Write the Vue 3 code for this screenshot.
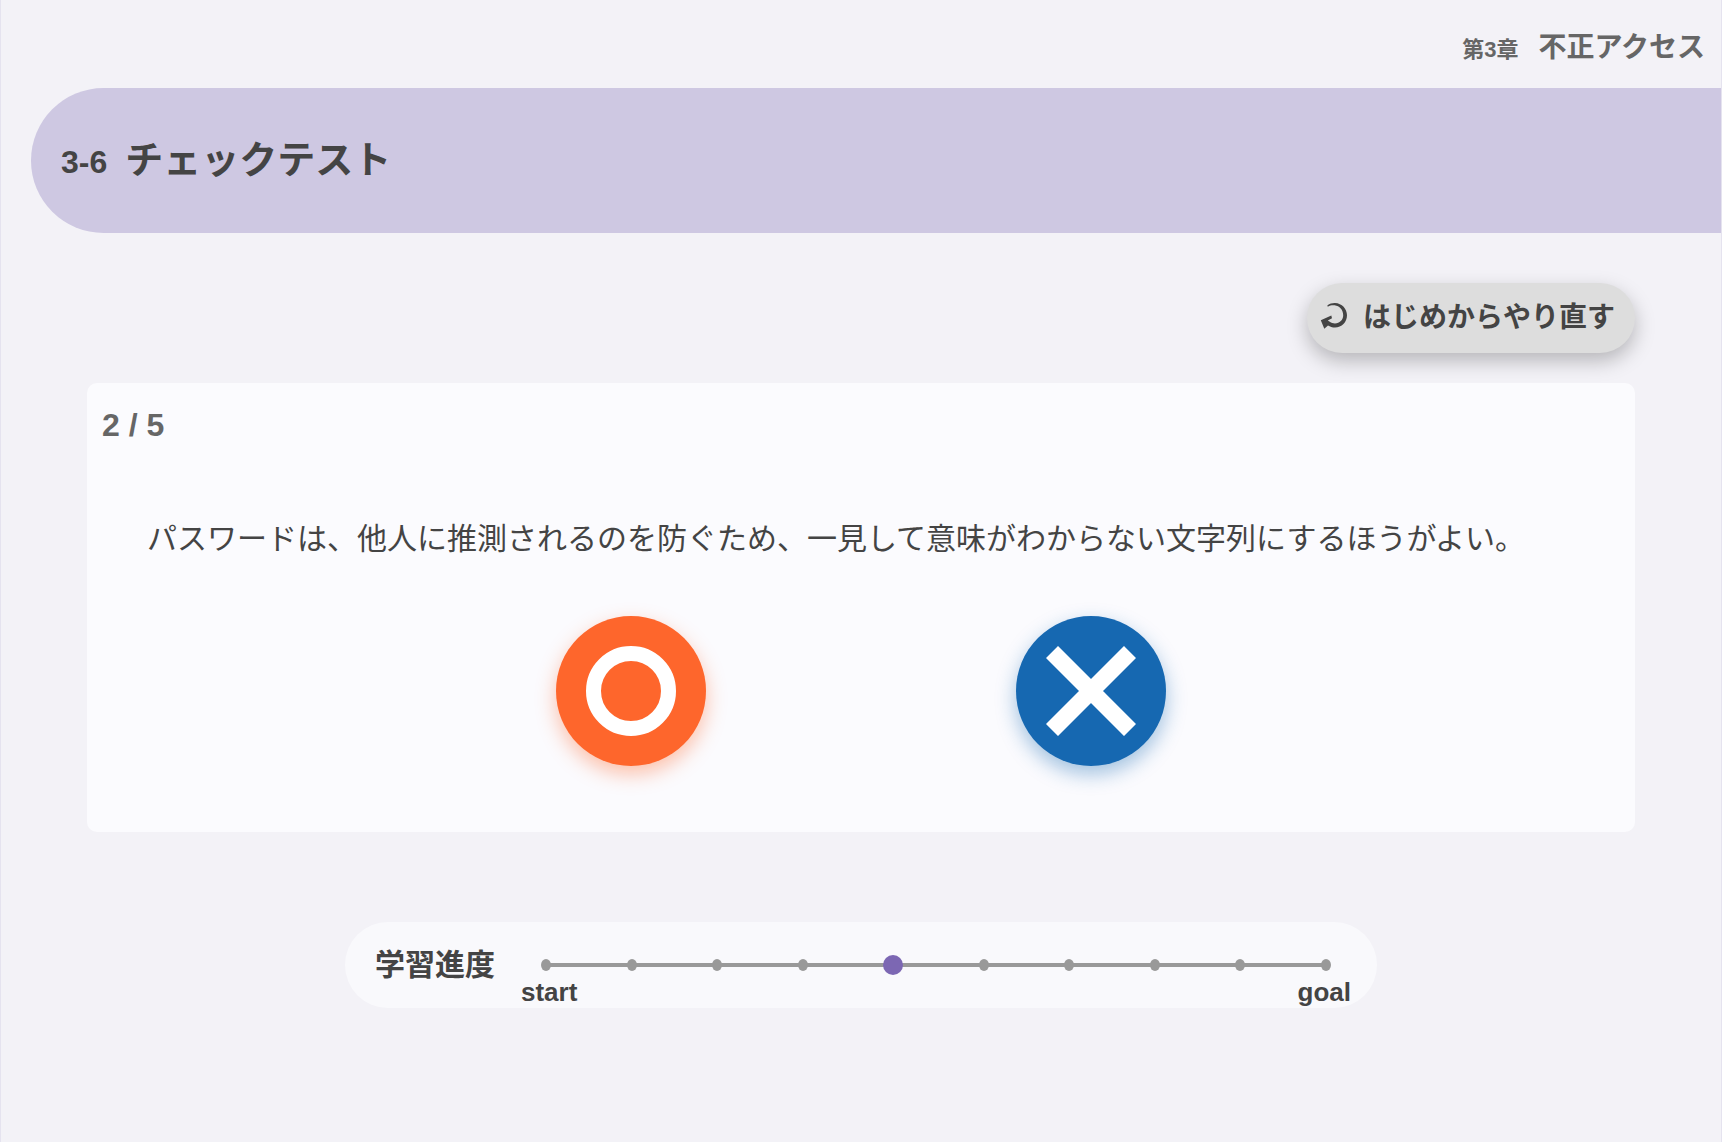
<template>
  <div class="page">
    <header class="chapter">
      <span class="chapter-no">第3章</span>
      <span class="chapter-name">不正アクセス</span>
    </header>

    <h1 class="title">
      <span class="title-no">3-6</span>
      <span>チェックテスト</span>
    </h1>

    <main class="content">
      <div class="toolbar">
        <button class="restart" type="button" @click="restart">
          <svg class="restart-icon" viewBox="0 0 26 30" aria-hidden="true">
            <path
              d="M6.3 2.4C8.800 .4 11.600 -.2 14 -.1C21 .2 26 5.700 26 12.300C26 19.200 20.700 24.600 14 24.600C11.300 24.600 9 23.800 7 22.500L3.300 25.800L-.2 17.300L10.300 12.500L11 15.300L6.800 17.600L8.800 18.800C10.300 19.900 12 20.500 14 20.500C18.500 20.500 22.200 17 22.200 12.300C22.200 6.800 18.600 2.900 13.600 2.300C11.300 2 9 2.400 6.800 3.700Z"
            />
          </svg>
          <span>はじめからやり直す</span>
        </button>
      </div>

      <section class="card">
        <p class="counter">{{ current + 1 }} / {{ total }}</p>
        <p class="question">{{ question }}</p>
        <div class="answers">
          <button
            class="answer maru"
            type="button"
            aria-label="正しい"
            @click="answer"
          >
            <svg viewBox="0 0 90 90" aria-hidden="true">
              <circle cx="45" cy="45" r="37.5" />
            </svg>
          </button>
          <button
            class="answer batsu"
            type="button"
            aria-label="誤り"
            @click="answer"
          >
            <svg viewBox="0 0 90 90" aria-hidden="true">
              <path d="M6 6L84 84M84 6L6 84" />
            </svg>
          </button>
        </div>
      </section>

      <section class="progress">
        <h2 class="progress-label">学習進度</h2>
        <div class="track">
          <ol class="steps">
            <li
              v-for="n in stepCount"
              :key="n"
              class="step"
              :class="{ active: n === activeStep }"
            >
              <span class="dot"></span>
            </li>
          </ol>
          <div class="ends">
            <span>start</span>
            <span>goal</span>
          </div>
        </div>
      </section>
    </main>
  </div>
</template>

<script setup>
import { ref } from "vue";

const question =
  "パスワードは、他人に推測されるのを防ぐため、一見して意味がわからない文字列にするほうがよい。";

const total = 5;
const stepCount = 10;
const activeStep = 5;
const current = ref(1);

function restart() {
  current.value = 0;
}

function answer() {
  if (current.value < total - 1) {
    current.value += 1;
  }
}
</script>

<style>
body {
  margin: 0;
  background: #f3f2f7;
}
</style>

<style scoped>
.page {
  box-sizing: border-box;
  min-height: 100vh;
  padding-bottom: 40px;
  border: solid #e5e3ef;
  border-width: 0 1px;
  color: #444;
  font-family: "Liberation Sans", "Noto Sans CJK JP", sans-serif;
}

.chapter {
  display: flex;
  justify-content: flex-end;
  align-items: baseline;
  gap: 20px;
  padding: 28px 16px 18px;
  color: #666;
  font-weight: bold;
  line-height: 40px;
}

.chapter-no {
  font-size: 22px;
}

.chapter-name {
  font-size: 28px;
}

.title {
  display: flex;
  align-items: baseline;
  gap: 18px;
  margin: 0 0 0 30px;
  padding: 40px 30px 38px;
  border-radius: 73px 0 0 73px;
  background: #cec8e2;
  font-size: 38px;
  line-height: 65px;
}

.title-no {
  font-size: 32px;
}

.content {
  width: 90%;
  margin: 50px auto 0;
}

.toolbar {
  display: flex;
  justify-content: flex-end;
  margin-bottom: 30px;
}

.restart {
  display: flex;
  align-items: center;
  gap: 16px;
  padding: 15px 20px 15px 14px;
  border: 0;
  border-radius: 35px;
  background: #ddd;
  box-shadow: 0 8px 20px rgba(0, 0, 0, 0.25);
  color: #444;
  font: inherit;
  font-size: 28px;
  font-weight: bold;
  line-height: 40px;
  cursor: pointer;
}

.restart-icon {
  width: 26px;
  height: 30px;
  overflow: visible;
  fill: currentColor;
}

.card {
  padding: 22px 15px 66px;
  border-radius: 10px;
  background: #fbfbfe;
  font-size: 30px;
}

.counter {
  margin: 0;
  color: #666;
  font-size: 32px;
  font-weight: bold;
  line-height: 40px;
}

.question {
  margin: 71px 45px 54px;
  line-height: 46px;
}

.answers {
  display: flex;
  justify-content: center;
  gap: 310px;
}

.answer {
  display: grid;
  place-items: center;
  width: 150px;
  height: 150px;
  padding: 0;
  border: 0;
  border-radius: 50%;
  cursor: pointer;
}

.answer svg {
  width: 90px;
  height: 90px;
  fill: none;
  stroke: #fff;
  stroke-width: 15;
}

.answer.batsu svg {
  stroke-width: 17;
}

.maru {
  background: #fe662c;
  box-shadow: 0 8px 20px rgba(255, 102, 43, 0.4);
}

.batsu {
  background: #1668b1;
  box-shadow: 0 8px 20px rgba(22, 104, 177, 0.4);
}

.progress {
  display: flex;
  gap: 26px;
  box-sizing: border-box;
  width: calc(100% * 2 / 3);
  margin: 90px auto 0;
  padding: 0 26px 0 30px;
  border-radius: 43px;
  background: #f9f9fc;
}

.progress-label {
  margin: 0;
  font-size: 30px;
  line-height: 86px;
  white-space: nowrap;
}

.track {
  flex: 1;
  padding-top: 33px;
}

.steps {
  display: flex;
  height: 20px;
  margin: 0 0 2px;
  padding: 0 20px;
  list-style: none;
}

.step {
  display: flex;
  align-items: center;
}

.step:not(:first-child) {
  flex: 1 0 auto;
}

.step:not(:first-child)::before {
  content: "";
  flex: 1;
  height: 4px;
  margin: 0 -1px;
  background: #999;
}

.dot {
  width: 10px;
  height: 12px;
  border-radius: 50%;
  background: #999;
}

.active .dot {
  position: relative;
  width: 20px;
  height: 20px;
  background: #7c67b3;
}

.ends {
  display: flex;
  justify-content: space-between;
  font-size: 26px;
  font-weight: bold;
  line-height: 30px;
}
</style>
